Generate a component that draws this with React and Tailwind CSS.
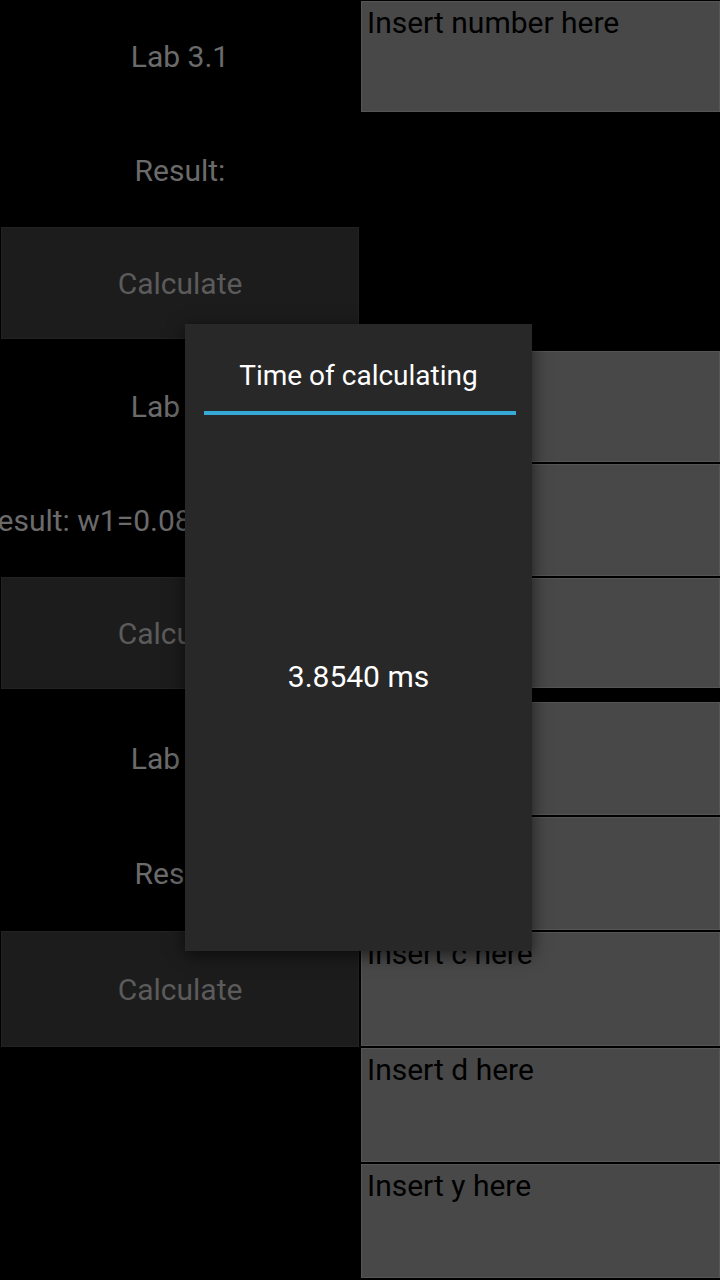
import React from "react";

const font = { fontFamily: "Roboto, 'Noto Sans', sans-serif" };

function Label({ children }) {
  return (
    <div className="flex h-full w-[360px] items-center justify-center overflow-visible whitespace-nowrap text-[30px] text-[#6b6b6b]">
      {children}
    </div>
  );
}

function Btn() {
  return (
    <div className="flex h-full w-[360px] pl-px pr-px">
      <div className="flex flex-1 items-center justify-center border border-[#222] bg-[#1c1c1c] text-[30px] text-[#5b5b5b]">
        Calculate
      </div>
    </div>
  );
}

function Box({ text }) {
  return (
    <div className="flex h-full w-[360px] pl-px py-px">
      <div className="flex-1 border border-[#555] bg-[#484848] px-[5px] pt-[2px] text-[30px] leading-[38px] text-black">
        {text}
      </div>
    </div>
  );
}

function Row({ h, left, right }) {
  return (
    <div className={`flex ${h}`}>
      {left || <div className="w-[360px]" />}
      {right || <div className="w-[360px]" />}
    </div>
  );
}

export default function App() {
  return (
    <div className="relative h-[1280px] w-[720px] overflow-hidden bg-black" style={font}>
      <div className="flex flex-col">
        <Row h="h-[113px]" left={<Label>Lab 3.1</Label>} right={<Box text="Insert number here" />} />
        <Row h="h-[114px]" left={<Label>Result:</Label>} />
        <Row h="h-[112px]" left={<Btn />} />
        <div className="h-[11px]" />
        <Row h="h-[113px]" left={<Label>Lab 3.2</Label>} right={<Box text="Insert a" />} />
        <Row h="h-[114px]" left={<Label>Result: w1=0.0811 w2=0.5567</Label>} right={<Box text="Insert b" />} />
        <Row h="h-[112px]" left={<Btn />} right={<Box text="Insert p" />} />
        <div className="h-[12px]" />
        <Row h="h-[115px]" left={<Label>Lab 3.3</Label>} right={<Box text="Insert a" />} />
        <Row h="h-[115px]" left={<Label>Result:</Label>} right={<Box text="Insert b" />} />
        <Row h="h-[116px]" left={<Btn />} right={<Box text="Insert c here" />} />
        <Row h="h-[116px]" right={<Box text="Insert d here" />} />
        <Row h="h-[116px]" right={<Box text="Insert y here" />} />
      </div>

      <div className="absolute left-[185px] top-[324px] flex h-[627px] w-[347px] flex-col bg-[#282828] shadow-[0_4px_16px_rgba(0,0,0,0.6)]">
        <div className="flex h-[87px] items-end justify-center pb-[18px] text-[28px] leading-[34px] text-white">
          Time of calculating
        </div>
        <div className="ml-[19px] mr-[16px] h-[4px] bg-[#36a9d6]" />
        <div className="flex flex-1 items-center justify-center pb-[14px] text-[30px] text-white">
          3.8540 ms
        </div>
      </div>
    </div>
  );
}
